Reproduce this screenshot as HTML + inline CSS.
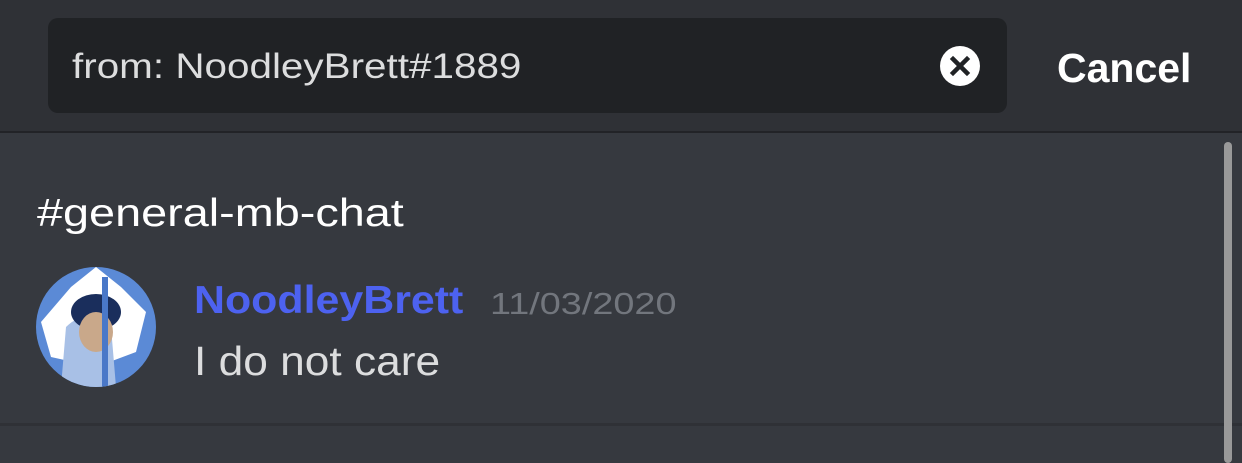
<!DOCTYPE html>
<html><head><style>
body{margin:0;width:1242px;height:463px;overflow:hidden;background:#36393f;font-family:"Liberation Sans",sans-serif;position:relative}
.top{position:absolute;left:0;top:0;width:1242px;height:131px;background:#2f3136;border-bottom:2px solid #222327}
.box{position:absolute;left:48px;top:18px;width:959px;height:95px;background:#202225;border-radius:10px}
.t{position:absolute;white-space:nowrap;transform-origin:0 0}
</style></head><body>
<div class="top"></div>
<div class="box"></div>
<div class="t" style="left:72px;top:47px;font-size:35px;color:#dcddde;transform:scaleX(1.155)">from: NoodleyBrett#1889</div>
<svg style="position:absolute;left:940px;top:46px" width="40" height="40" viewBox="0 0 40 40"><circle cx="20" cy="20" r="20" fill="#fff"/><path d="M13 13L27 27M27 13L13 27" stroke="#202225" stroke-width="4.5" stroke-linecap="square"/></svg>
<div class="t" style="left:1057px;top:45px;font-size:41px;font-weight:bold;color:#fff">Cancel</div>
<div class="t" style="left:37px;top:192px;font-size:39px;color:#fff;transform:scaleX(1.2)">#general-mb-chat</div>
<svg style="position:absolute;left:36px;top:267px" width="120" height="120" viewBox="0 0 120 120"><defs><clipPath id="c"><circle cx="60" cy="60" r="60"/></clipPath></defs><g clip-path="url(#c)"><rect width="120" height="120" fill="#5b8ad6"/><path d="M35 20L60 0L85 20L110 45L100 85L60 100L15 90L5 55Z" fill="#fff"/><path d="M30 60Q50 40 75 60L80 120L25 120Z" fill="#a8c0e6"/><ellipse cx="60" cy="45" rx="25" ry="18" fill="#1a2e5c"/><ellipse cx="60" cy="65" rx="17" ry="20" fill="#c9a88a"/><rect x="66" y="10" width="6" height="110" fill="#4a78c8"/></g></svg>
<div class="t" style="left:194px;top:279px;font-size:39px;font-weight:bold;color:#4d62f0;transform:scaleX(1.1)">NoodleyBrett</div>
<div class="t" style="left:490px;top:286px;font-size:31px;color:#72767d;transform:scaleX(1.22)">11/03/2020</div>
<div class="t" style="left:194px;top:338px;font-size:41px;color:#dcddde;transform:scaleX(1.08)">I do not care</div>
<div style="position:absolute;left:0;top:423px;width:1242px;height:3px;background:#2f3136"></div>
<div style="position:absolute;left:1224px;top:142px;width:8px;height:321px;background:#999;border-radius:4px"></div>
</body></html>
